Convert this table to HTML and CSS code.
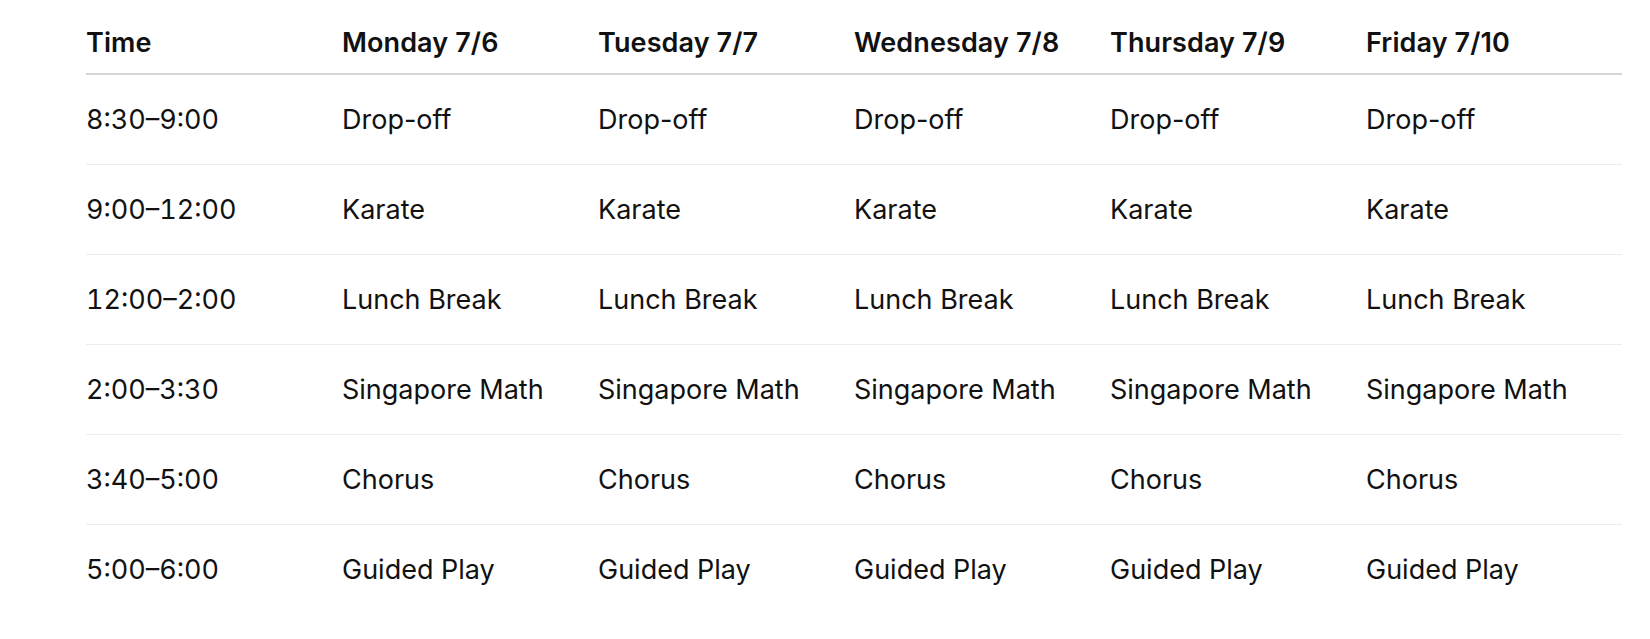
FILE: index.html
```html
<!DOCTYPE html>
<html lang="en">
<head>
<meta charset="utf-8">
<title>Schedule</title>
<link rel="stylesheet" href="styles.css">
</head>
<body>
<div class="wrap">
<table class="schedule">
  <colgroup>
    <col class="c"><col class="c"><col class="c"><col class="c"><col class="c"><col class="c">
  </colgroup>
  <thead>
    <tr>
      <th>Time</th>
      <th>Monday 7/6</th>
      <th>Tuesday 7/7</th>
      <th>Wednesday 7/8</th>
      <th>Thursday 7/9</th>
      <th>Friday 7/10</th>
    </tr>
  </thead>
  <tbody>
    <tr><td class="time">8:30–9:00</td><td>Drop-off</td><td>Drop-off</td><td>Drop-off</td><td>Drop-off</td><td>Drop-off</td></tr>
    <tr><td class="time">9:00–12:00</td><td>Karate</td><td>Karate</td><td>Karate</td><td>Karate</td><td>Karate</td></tr>
    <tr><td class="time">12:00–2:00</td><td>Lunch Break</td><td>Lunch Break</td><td>Lunch Break</td><td>Lunch Break</td><td>Lunch Break</td></tr>
    <tr><td class="time">2:00–3:30</td><td>Singapore Math</td><td>Singapore Math</td><td>Singapore Math</td><td>Singapore Math</td><td>Singapore Math</td></tr>
    <tr><td class="time">3:40–5:00</td><td>Chorus</td><td>Chorus</td><td>Chorus</td><td>Chorus</td><td>Chorus</td></tr>
    <tr><td class="time">5:00–6:00</td><td>Guided Play</td><td>Guided Play</td><td>Guided Play</td><td>Guided Play</td><td>Guided Play</td></tr>
  </tbody>
</table>
</div>
</body>
</html>
```
FILE: styles.css
```css
html, body {
  margin: 0;
  padding: 0;
  background: #ffffff;
}
body {
  font-family: Inter, "Noto Sans", "Liberation Sans", sans-serif;
  color: #111111;
}
.wrap {
  padding: 12px 0 0 86px;
}
.schedule {
  border-collapse: collapse;
  table-layout: fixed;
  width: 1536px;
}
.schedule .c {
  width: 256px;
}
.schedule th {
  text-align: left;
  font-weight: 600;
  font-size: 27px;
  letter-spacing: 0.1px;
  height: 61px;
  padding: 0;
  vertical-align: middle;
  border-bottom: 2px solid #d6d6d6;
}
.schedule td {
  font-size: 27px;
  font-weight: 400;
  height: 89px;
  padding: 0;
  vertical-align: middle;
  border-bottom: 1px solid #ececec;
  white-space: nowrap;
}
.schedule td.time {
  font-variant-numeric: tabular-nums;
}
.schedule tbody tr:last-child td {
  border-bottom: none;
}
```
